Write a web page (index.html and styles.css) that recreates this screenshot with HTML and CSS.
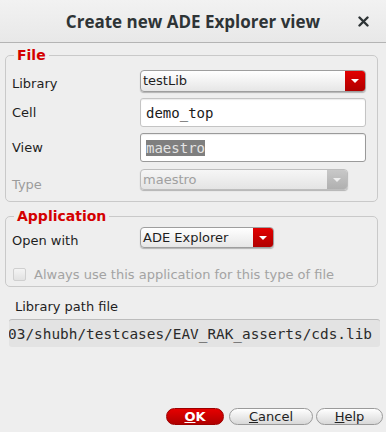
FILE: index.html
```html
<!DOCTYPE html>
<html lang="en">
<head>
  <meta charset="UTF-8" />
  <title>Create new ADE Explorer view</title>
  <link rel="stylesheet" href="styles.css">
</head>
<body>
  <div class="window">
    <!-- Dialog title bar -->
    <div class="titlebar">
      <span class="title">Create new ADE Explorer view</span>
      <span class="close">
        <svg width="11" height="11" viewBox="0 0 11 11"><path d="M1.5 1.5 L9.5 9.5 M9.5 1.5 L1.5 9.5" stroke="#2e3436" stroke-width="2.4" stroke-linecap="round"/></svg>
      </span>
    </div>

    <div class="content">
      <!-- File group -->
      <fieldset class="group file-group">
        <legend>File</legend>
        <div class="row row-library">
          <span class="label">Library</span>
          <div class="combo combo-library">
            <span class="combo-text">testLib</span>
            <span class="combo-btn"><i class="arrow"></i></span>
          </div>
        </div>
        <div class="row row-cell">
          <span class="label">Cell</span>
          <div class="entry"><span class="entry-text">demo_top</span></div>
        </div>
        <div class="row row-view">
          <span class="label">View</span>
          <div class="entry entry-focus"><span class="entry-text selected">maestro</span></div>
        </div>
        <div class="row row-type">
          <span class="label disabled">Type</span>
          <div class="combo combo-type is-disabled">
            <span class="combo-text">maestro</span>
            <span class="combo-btn"><i class="arrow"></i></span>
          </div>
        </div>
      </fieldset>

      <!-- Application group -->
      <fieldset class="group app-group">
        <legend>Application</legend>
        <div class="row row-open">
          <span class="label">Open with</span>
          <div class="combo combo-app">
            <span class="combo-text">ADE Explorer</span>
            <span class="combo-btn"><i class="arrow"></i></span>
          </div>
        </div>
        <div class="check-row">
          <span class="checkbox"></span>
          <span class="check-text">Always use this application for this type of file</span>
        </div>
      </fieldset>

      <!-- Library path -->
      <div class="path-label">Library path file</div>
      <div class="path-field"><span class="path-text">03/shubh/testcases/EAV_RAK_asserts/cds.lib</span></div>
    </div>

    <!-- Dialog buttons -->
    <div class="buttons">
      <button class="btn btn-ok"><u>O</u>K</button>
      <button class="btn btn-cancel"><u>C</u>ancel</button>
      <button class="btn btn-help"><u>H</u>elp</button>
    </div>
  </div>
</body>
</html>
```

FILE: styles.css
```css
/* Dialog window */
body {
  margin: 0;
  background: #eeeeee;
  font-family: "DejaVu Sans", sans-serif;
  font-size: 13px;
  color: #1e1e1e;
}

.window {
  width: 386px;
  height: 432px;
  display: flex;
  flex-direction: column;
  overflow: hidden;
}

/* Title bar */
.titlebar {
  height: 42px;
  flex: none;
  display: grid;
  grid-template-columns: 1fr auto 1fr;
  align-items: center;
  background: linear-gradient(#f2f2f2, #e8e8e8);
  border-bottom: 1px solid #b4b4b4;
}

.title {
  grid-column: 2;
  font-family: "Open Sans", sans-serif;
  font-weight: 700;
  font-size: 17px;
  color: #2e3436;
}

.close {
  grid-column: 3;
  justify-self: end;
  display: flex;
  padding-right: 17px;
}

/* Main content */
.content {
  padding: 4px 8px 0 5px;
}

.group {
  margin: 0;
  padding: 7px 11px 9px 6px;
  border: 1px solid #c9c9c9;
  border-radius: 5px;
  min-width: 0;
}

.group legend {
  margin-left: 2px;
  padding: 0 3px;
  line-height: 16px;
  font-weight: 700;
  font-size: 14px;
  color: #d40000;
}

.app-group {
  margin-top: 6px;
  padding-top: 3px;
  padding-bottom: 5px;
}

.row {
  display: flex;
  align-items: center;
}

.label {
  width: 128px;
  flex: none;
}

.label.disabled {
  color: #9c9c9c;
}

.row-library .label { margin-top: 4px; }
.row-cell { margin-top: 6px; }
.row-view { margin-top: 6px; }
.row-type { margin-top: 5px; }
.row-type .label { margin-top: 10px; }
.row-open .label { margin-top: 5px; }

/* Combo boxes */
.combo {
  box-sizing: border-box;
  height: 22px;
  display: flex;
  border: 1px solid #9e9e9e;
  border-radius: 4px;
  background: linear-gradient(#ffffff, #e6e6e6);
  box-shadow: 0 1px 1px rgba(0,0,0,0.25);
  overflow: hidden;
}

.combo-library { width: 226px; }
.combo-type { width: 208px; height: 21px; }
.combo-app { width: 134px; height: 21px; }

.combo-text {
  flex: 1;
  padding-left: 2px;
  line-height: 20px;
  white-space: nowrap;
}

.combo-btn {
  width: 20px;
  flex: none;
  display: flex;
  align-items: center;
  justify-content: center;
  background: linear-gradient(#e20000, #b00000);
}

.arrow {
  width: 0;
  height: 0;
  border-left: 4px solid transparent;
  border-right: 4px solid transparent;
  border-top: 4px solid #ffffff;
}

.combo.is-disabled {
  border-color: #bdbdbd;
  background: linear-gradient(#f6f6f6, #e4e4e4);
}

.combo.is-disabled .combo-text {
  color: #a0a0a0;
}

.combo.is-disabled .combo-btn {
  background: linear-gradient(#c8c8c8, #b0b0b0);
}

.combo.is-disabled .arrow {
  border-top-color: #eeeeee;
}

/* Text entries */
.entry {
  box-sizing: border-box;
  width: 228px;
  height: 29px;
  display: flex;
  align-items: center;
  padding-left: 5px;
  background: #ffffff;
  border: 1px solid #c4c4c4;
  border-radius: 3px;
  box-shadow: inset 0 1px 1px rgba(0,0,0,0.08);
}

.entry-focus {
  border-color: #9a9a9a;
}

.entry-text {
  font-family: "DejaVu Sans Mono", monospace;
  font-size: 14px;
  color: #1a1a1a;
  line-height: 16px;
}

.entry-text.selected {
  background: #7f7f7f;
  color: #e4e4e4;
}

/* Checkbox row */
.check-row {
  display: flex;
  align-items: center;
  margin-top: 19px;
  height: 14px;
}

.checkbox {
  box-sizing: border-box;
  width: 13px;
  height: 13px;
  margin-left: 1px;
  border: 1px solid #cfcfcf;
  border-radius: 2px;
  background: linear-gradient(#f4f4f4, #e2e2e2);
}

.check-text {
  margin-left: 8px;
  color: #a3a3a3;
  white-space: nowrap;
}

/* Library path */
.path-label {
  margin-top: 12px;
  padding-left: 10px;
  line-height: 16px;
}

.path-field {
  box-sizing: border-box;
  margin: 4px 0 0 4px;
  width: 371px;
  height: 28px;
  display: flex;
  align-items: center;
  justify-content: flex-end;
  padding-right: 8px;
  overflow: hidden;
  background: #e3e3e3;
  border-top: 1px solid #bcbcbc;
  border-radius: 3px;
}

.path-text {
  flex: none;
  white-space: nowrap;
  font-family: "DejaVu Sans Mono", monospace;
  font-size: 14.4px;
  color: #2a2a2a;
}

/* Bottom buttons */
.buttons {
  margin-top: auto;
  display: flex;
  justify-content: flex-end;
  padding: 0 3px 7px 0;
}

.btn {
  height: 17px;
  padding: 0;
  border-radius: 9px;
  border: 1px solid #9a9a9a;
  background: linear-gradient(#ffffff, #d8d8d8);
  font-family: "DejaVu Sans", sans-serif;
  font-size: 13px;
  line-height: 15px;
  color: #222;
}

.btn-ok {
  width: 58px;
  border-color: #9c0000;
  background: linear-gradient(#e60000, #b00000);
  color: #ffffff;
  font-weight: 700;
}

.btn-cancel {
  width: 84px;
  margin-left: 5px;
}

.btn-help {
  width: 67px;
  margin-left: 3px;
}
```
